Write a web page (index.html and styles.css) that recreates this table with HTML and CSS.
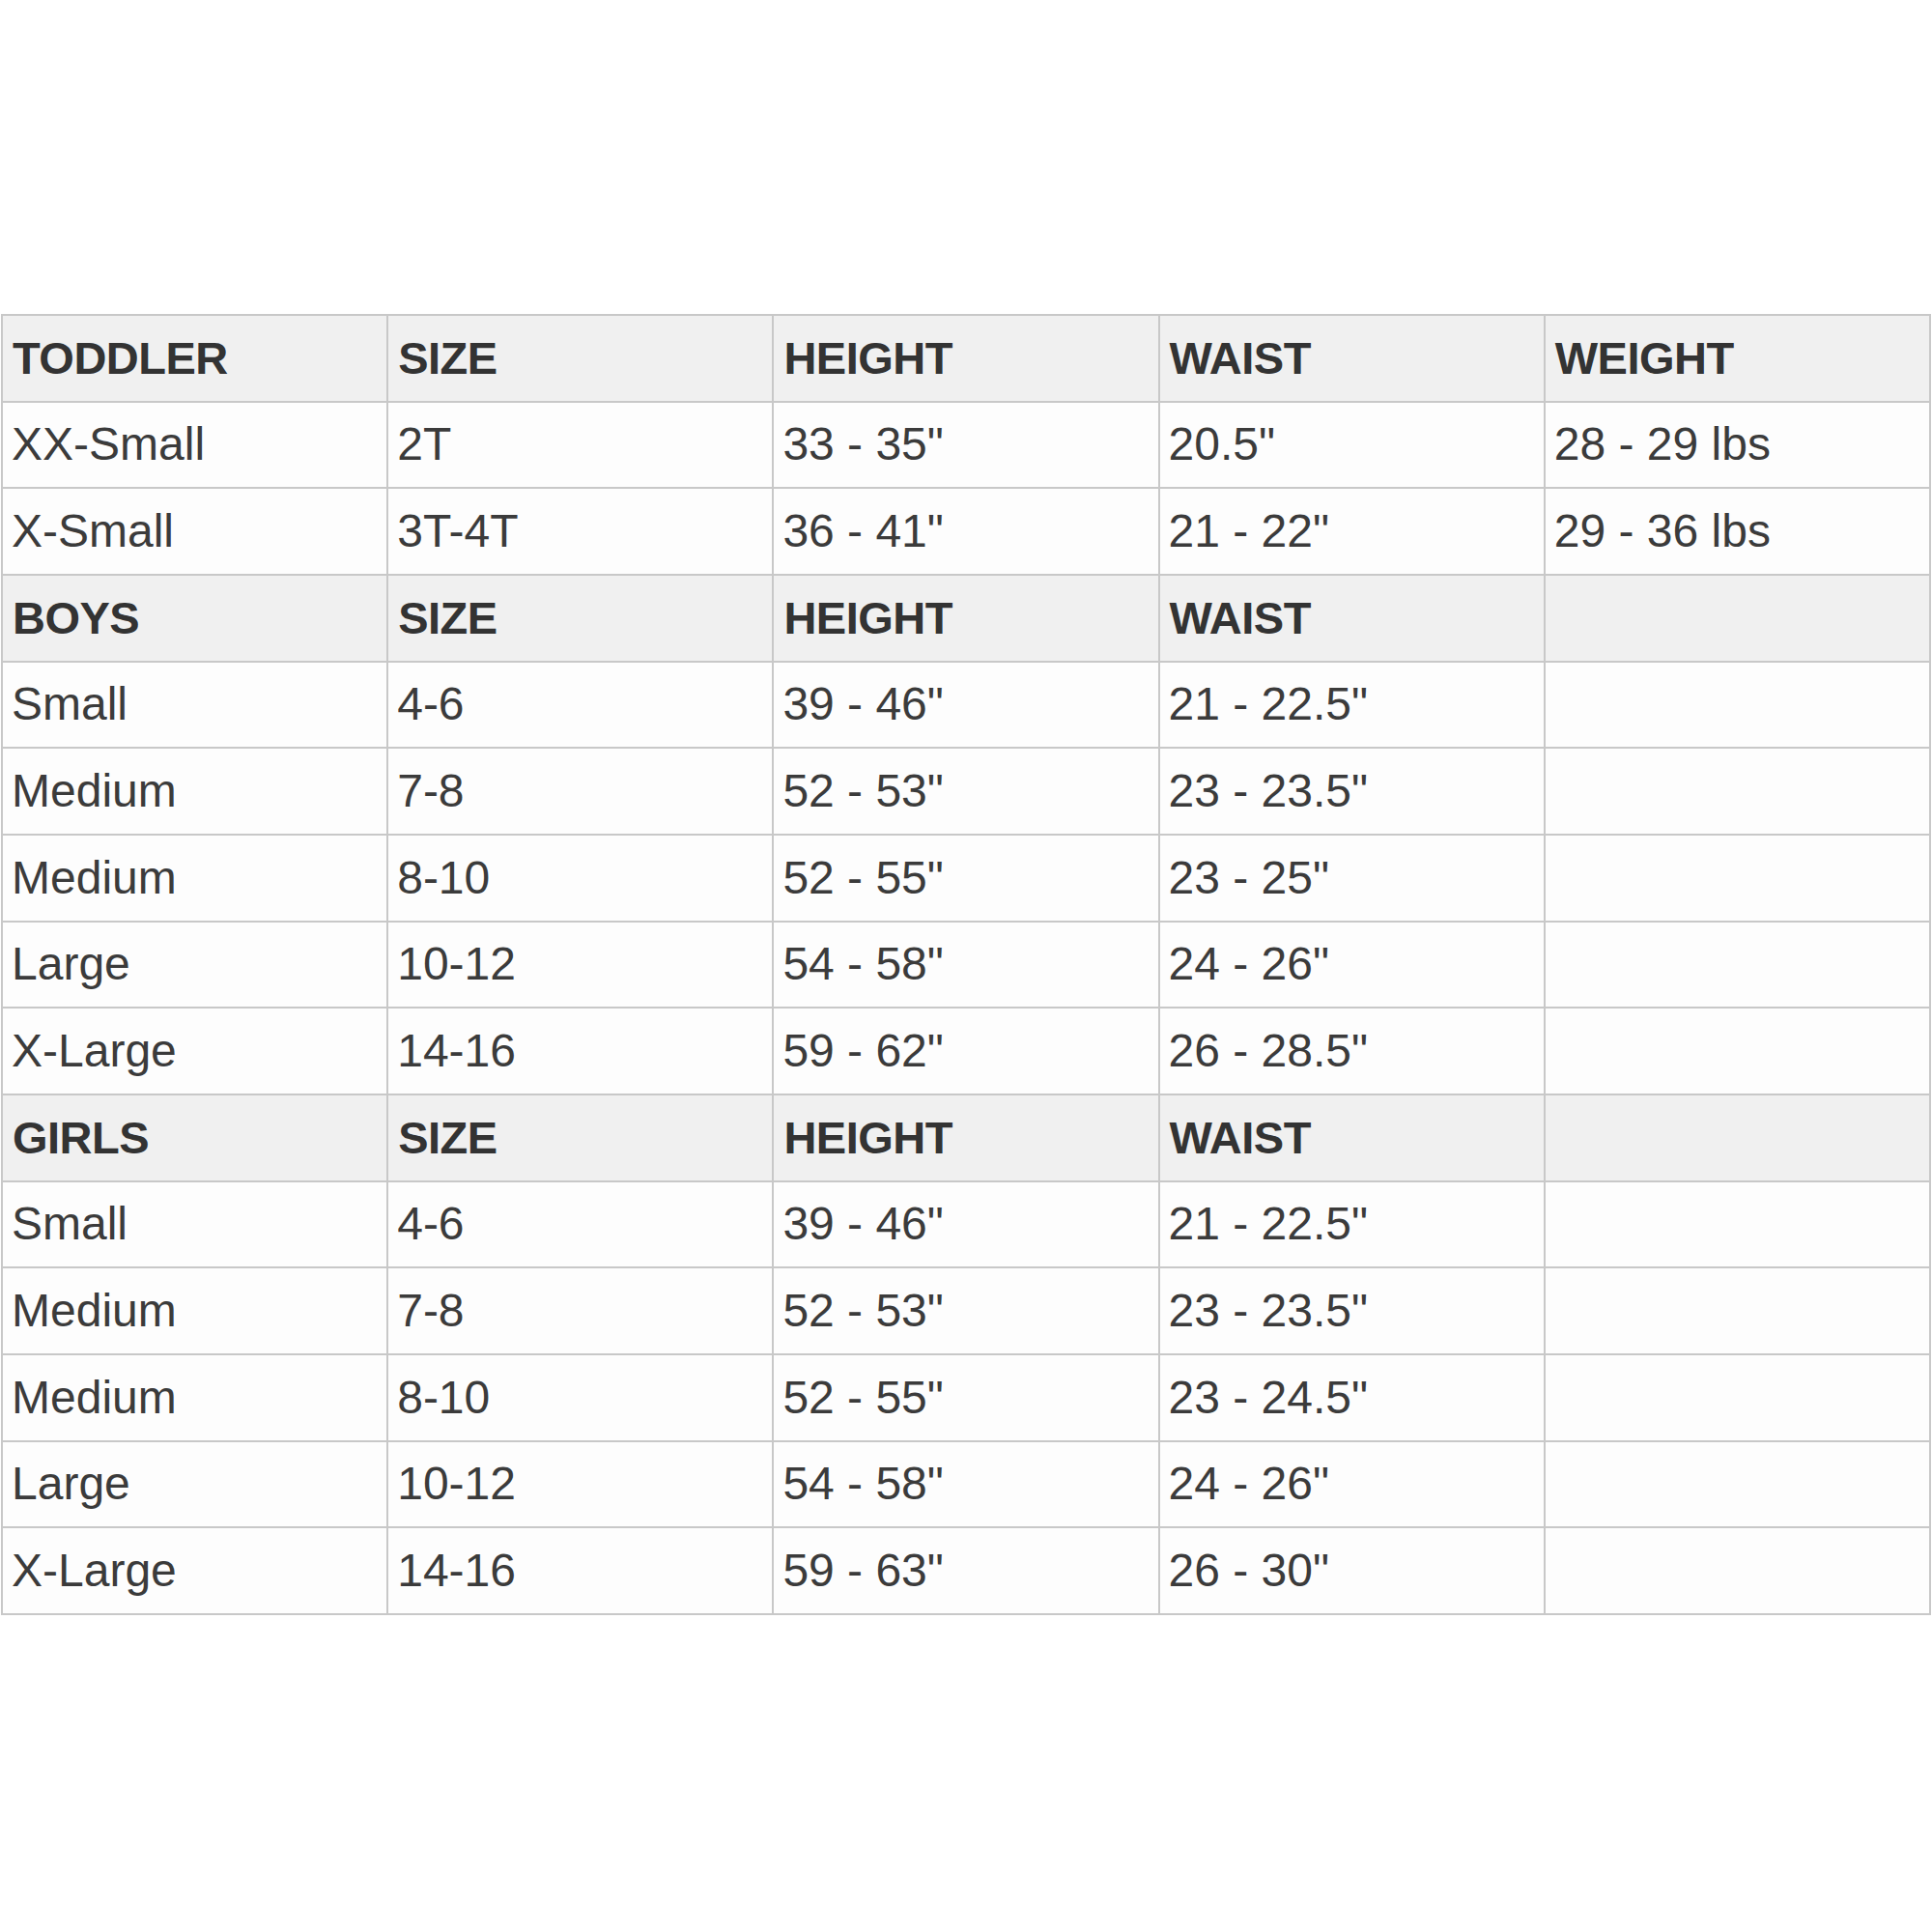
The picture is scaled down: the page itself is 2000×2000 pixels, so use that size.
FILE: index.html
```html
<!DOCTYPE html>
<html>
<head>
<meta charset="utf-8">
<link rel="stylesheet" href="styles.css">
</head>
<body>
<div class="page">
<table class="chart">
<colgroup><col><col><col><col><col></colgroup>
<tr class="head"><td>TODDLER</td><td>SIZE</td><td>HEIGHT</td><td>WAIST</td><td>WEIGHT</td></tr>
<tr><td>XX-Small</td><td>2T</td><td>33 - 35"</td><td>20.5"</td><td>28 - 29 lbs</td></tr>
<tr><td>X-Small</td><td>3T-4T</td><td>36 - 41"</td><td>21 - 22"</td><td>29 - 36 lbs</td></tr>
<tr class="head"><td>BOYS</td><td>SIZE</td><td>HEIGHT</td><td>WAIST</td><td></td></tr>
<tr><td>Small</td><td>4-6</td><td>39 - 46"</td><td>21 - 22.5"</td><td></td></tr>
<tr><td>Medium</td><td>7-8</td><td>52 - 53"</td><td>23 - 23.5"</td><td></td></tr>
<tr><td>Medium</td><td>8-10</td><td>52 - 55"</td><td>23 - 25"</td><td></td></tr>
<tr><td>Large</td><td>10-12</td><td>54 - 58"</td><td>24 - 26"</td><td></td></tr>
<tr><td>X-Large</td><td>14-16</td><td>59 - 62"</td><td>26 - 28.5"</td><td></td></tr>
<tr class="head"><td>GIRLS</td><td>SIZE</td><td>HEIGHT</td><td>WAIST</td><td></td></tr>
<tr><td>Small</td><td>4-6</td><td>39 - 46"</td><td>21 - 22.5"</td><td></td></tr>
<tr><td>Medium</td><td>7-8</td><td>52 - 53"</td><td>23 - 23.5"</td><td></td></tr>
<tr><td>Medium</td><td>8-10</td><td>52 - 55"</td><td>23 - 24.5"</td><td></td></tr>
<tr><td>Large</td><td>10-12</td><td>54 - 58"</td><td>24 - 26"</td><td></td></tr>
<tr><td>X-Large</td><td>14-16</td><td>59 - 63"</td><td>26 - 30"</td><td></td></tr>
</table>
</div>
</body>
</html>
```
FILE: styles.css
```css
html, body {
  margin: 0;
  padding: 0;
  background: #ffffff;
}
.page {
  width: 2000px;
  height: 2000px;
  padding-top: 325px;
  padding-left: 1px;
  box-sizing: border-box;
}
.chart {
  width: 1998px;
  border-collapse: collapse;
  table-layout: fixed;
  font-family: "Liberation Sans", Arial, sans-serif;
  font-size: 48px;
  color: #3b3b3b;
}
.chart td {
  height: 87.67px;
  border: 2px solid #c8c8c8;
  padding: 0 0 0 9px;
  vertical-align: middle;
  background: #fdfdfd;
  white-space: nowrap;
  line-height: 1;
}
.chart .head td {
  background: #f0f0f0;
  font-weight: bold;
  font-size: 47px;
  letter-spacing: -0.5px;
  padding-left: 10px;
  color: #333333;
}
```
